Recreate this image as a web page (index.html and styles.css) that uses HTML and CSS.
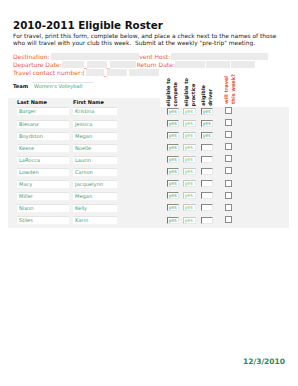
FILE: index.html
```html
<!DOCTYPE html>
<html>
<head>
<meta charset="utf-8">
<link rel="stylesheet" href="styles.css">
</head>
<body>
<div class="page">
  <h1 class="title">2010-2011 Eligible Roster</h1>
  <p class="intro">For travel, print this form, complete below, and place a check next to the names of those<br>who will travel with your club this week.&nbsp; Submit at the weekly "pre-trip" meeting.</p>

  <div class="trip">
    <div class="trip-row">
      <span class="lbl">Destination:</span><span class="fld fld-over w88"></span><span class="lbl">Event Host:</span><span class="fld w97 ml1"></span>
    </div>
    <div class="trip-row">
      <span class="lbl">Departure Date:</span><span class="fld w22"></span><span class="lbl">_</span><span class="fld w20"></span><span class="lbl">_</span><span class="fld w26"></span><span class="lbl sp">Return Date:</span><span class="fld w30"></span><span class="fld w24 ml1"></span><span class="fld w24 ml1"></span>
    </div>
    <div class="trip-row">
      <span class="lbl">Travel contact number:(</span><span class="fld w18 ml1"></span><span class="lbl">_</span><span class="fld w20"></span><span class="fld w30 ml2"></span>
    </div>
  </div>

  <div class="roster">
    <div class="roster-head">
      <div class="head-left">
        <div class="team-row"><span class="team-label">Team</span><span class="team-field">Women's Volleyball</span></div>
        <div class="name-head"><span class="col-last">Last Name</span><span class="col-first">First Name</span></div>
      </div>
      <div class="head-right">
        <div class="vhead vh-compete">eligible to<br>compete</div>
        <div class="vhead vh-practice">eligible to<br>practice</div>
        <div class="vhead vh-driver">eligible<br>driver</div>
        <div class="vhead vh-travel">will travel<br>this week?</div>
      </div>
    </div>
    <div class="rows">
      <div class="row"><span class="name last">Barger</span><span class="name first">Kristina</span><span class="yes y1">yes</span><span class="yes y2">yes</span><span class="yes y3">yes</span><span class="cb"></span></div>
      <div class="row"><span class="name last">Biesanz</span><span class="name first">Jessica</span><span class="yes y1">yes</span><span class="yes y2">yes</span><span class="yes y3">yes</span><span class="cb"></span></div>
      <div class="row"><span class="name last">Boydston</span><span class="name first">Megan</span><span class="yes y1">yes</span><span class="yes y2">yes</span><span class="yes y3">yes</span><span class="cb"></span></div>
      <div class="row"><span class="name last">Keese</span><span class="name first">Noelle</span><span class="yes y1">yes</span><span class="yes y2">yes</span><span class="yes y3"></span><span class="cb"></span></div>
      <div class="row"><span class="name last">LaRocca</span><span class="name first">Laurin</span><span class="yes y1">yes</span><span class="yes y2">yes</span><span class="yes y3"></span><span class="cb"></span></div>
      <div class="row"><span class="name last">Lowden</span><span class="name first">Carson</span><span class="yes y1">yes</span><span class="yes y2">yes</span><span class="yes y3"></span><span class="cb"></span></div>
      <div class="row"><span class="name last">Macy</span><span class="name first">Jacquelynn</span><span class="yes y1">yes</span><span class="yes y2">yes</span><span class="yes y3"></span><span class="cb"></span></div>
      <div class="row"><span class="name last">Miller</span><span class="name first">Megan</span><span class="yes y1">yes</span><span class="yes y2">yes</span><span class="yes y3"></span><span class="cb"></span></div>
      <div class="row"><span class="name last">Nixon</span><span class="name first">Kelly</span><span class="yes y1">yes</span><span class="yes y2">yes</span><span class="yes y3"></span><span class="cb"></span></div>
      <div class="row"><span class="name last">Stiles</span><span class="name first">Karin</span><span class="yes y1">yes</span><span class="yes y2">yes</span><span class="yes y3"></span><span class="cb"></span></div>
    </div>
  </div>

  <div class="date">12/3/2010</div>
</div>
</body>
</html>
```

FILE: styles.css
```css
html, body {
  margin: 0;
  padding: 0;
  background: #ffffff;
}
.page {
  width: 298px;
  font-family: "DejaVu Sans", Verdana, sans-serif;
  color: #111;
}
.title {
  margin: 19px 0 0 13px;
  font-size: 10.3px;
  line-height: 13px;
  font-weight: bold;
  color: #111;
}
.intro {
  margin: 1px 0 0 13px;
  font-size: 5.9px;
  line-height: 7.3px;
  color: #222;
  white-space: nowrap;
}
.trip {
  margin-top: 5.4px;
  padding-left: 13px;
  color: #ee5a3a;
  font-size: 6px;
}
.trip-row {
  display: flex;
  align-items: center;
  height: 8px;
  white-space: nowrap;
}
.lbl {
  line-height: 8px;
}
.sp { margin-left: 1px; }
.fld {
  display: block;
  height: 7px;
  background: #ebebeb;
}
.fld-over {
  position: relative;
  z-index: 1;
  margin-right: -4px;
  margin-left: 2px;
}
.ml1 { margin-left: 1px; }
.ml2 { margin-left: 2px; }
.w18 { width: 18px; }
.w20 { width: 20px; }
.w22 { width: 22px; }
.w24 { width: 24px; }
.w26 { width: 26px; }
.w30 { width: 30px; }
.w88 { width: 88px; }
.w97 { width: 97px; }

.roster {
  margin-left: 8px;
  width: 281px;
}
.roster-head {
  display: flex;
  align-items: flex-end;
}
.head-left {
  width: 152px;
}
.team-row {
  display: flex;
  align-items: center;
  height: 8px;
  margin: 5px 0 8px 5px;
}
.team-label {
  font-size: 5.2px;
  font-weight: bold;
  width: 19px;
}
.team-field {
  display: block;
  width: 59px;
  height: 7px;
  line-height: 7px;
  border-top: 1px solid #e2e2e2;
  padding-left: 2px;
  font-size: 5px;
  color: #3f9f72;
}
.name-head {
  display: flex;
  align-items: center;
  height: 9px;
  background: #f2f2f2;
  padding-left: 9px;
  font-size: 5px;
  font-weight: bold;
}
.col-last { width: 56px; }
.head-right {
  display: flex;
  align-items: flex-end;
  height: 30px;
}
.vhead {
  writing-mode: vertical-rl;
  transform: rotate(180deg);
  font-size: 5px;
  line-height: 6.5px;
  font-weight: bold;
  white-space: nowrap;
  padding-top: 1px;
}
.vh-compete { margin-left: 5px; }
.vh-practice { margin-left: 5px; }
.vh-driver { margin-left: 4px; }
.vh-travel { margin-left: 10px; color: #ee4a2a; padding-top: 3px; }

.rows {
  background: #f2f2f2;
  padding-bottom: 0;
}
.row {
  display: flex;
  align-items: flex-start;
  height: 12.1px;
  padding-left: 9px;
}
.name {
  display: block;
  height: 7px;
  line-height: 7px;
  margin-top: 0.5px;
  background: #ffffff;
  border-top: 1px solid #e4e4e4;
  padding-left: 2px;
  font-size: 5.1px;
  color: #3f9f72;
  box-sizing: content-box;
}
.last { width: 50px; }
.first { width: 42px; margin-left: 4px; }
.yes {
  display: block;
  box-sizing: border-box;
  height: 7px;
  margin-top: 0.7px;
  background: #ffffff;
  border-top: 1px solid #8a8a8a;
  border-left: 1px solid #777;
  border-right: 1px solid #e8e8e8;
  border-bottom: 1px solid #e8e8e8;
  font-size: 4.8px;
  line-height: 5px;
  color: #3d9a5e;
  padding-left: 0.5px;
}
.y1 { width: 12px; margin-left: 50px; }
.y2 { width: 13px; margin-left: 4px; color: #5cc25c; border-top-color: #c8c8c8; border-left-color: #c8c8c8; }
.y3 { width: 12px; margin-left: 5px; }
.cb {
  display: block;
  box-sizing: border-box;
  width: 7px;
  height: 7px;
  margin-left: 12px;
  margin-top: 0px;
  border: 1px solid #8c8c8c;
  background: #ffffff;
}
.date {
  margin-top: 129px;
  padding-right: 13px;
  text-align: right;
  font-size: 7.5px;
  line-height: 9px;
  font-weight: bold;
  color: #2e8b57;
}
```
